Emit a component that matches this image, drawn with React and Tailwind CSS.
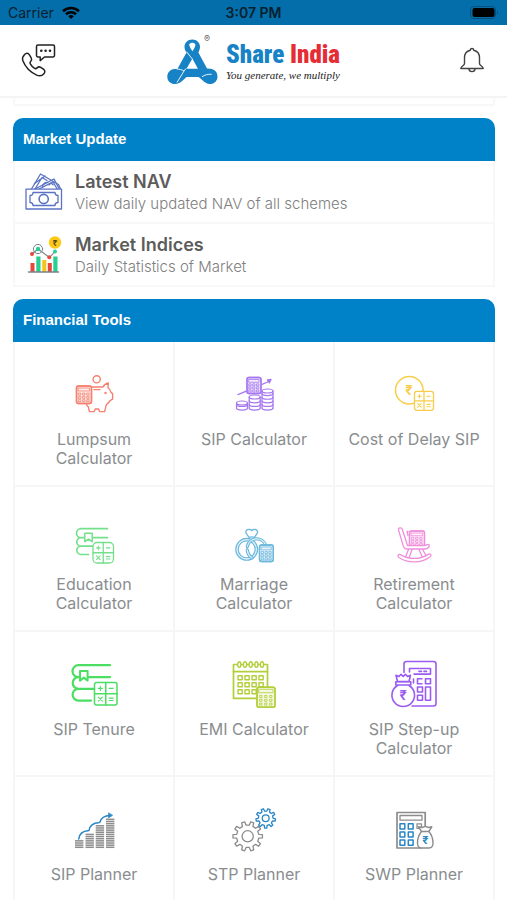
import React from 'react';

const Svg = ({ color = 'currentColor', width = 48, height = 48, children }) => (
  <svg
    width={width}
    height={height}
    viewBox={`0 0 ${width} ${height}`}
    fill="none"
    stroke={color}
    strokeLinecap="round"
    strokeLinejoin="round"
    className="shrink-0 overflow-visible"
    aria-hidden="true"
  >
    {children}
  </svg>
);

const Rupee = ({ x, y, size, color }) => (
  <text
    x={x}
    y={y}
    fontSize={size}
    fontWeight="700"
    fontFamily="Inter, sans-serif"
    textAnchor="middle"
    fill={color}
    stroke="none"
  >
    ₹
  </text>
);

// Small calculator with a display and a grid of keys
const MiniCalc = ({ x, y, w, h }) => {
  const keys = [];
  for (let row = 0; row < 3; row++) {
    for (let col = 0; col < 3; col++) {
      keys.push([x + (w * (col * 2 + 1.6)) / 7.2, y + h * (0.46 + row * 0.19)]);
    }
  }
  return (
    <g>
      <rect x={x} y={y} width={w} height={h} rx="2" fill="white" />
      <rect x={x} y={y} width={w} height={h} rx="2" fill="currentColor" fillOpacity="0.15" />
      <rect x={x + 2} y={y + 2} width={w - 4} height={h * 0.17} strokeWidth="0.8" />
      {keys.map(([kx, ky]) => (
        <rect key={`${kx}-${ky}`} x={kx - 1} y={ky - 1} width="2" height="2" strokeWidth="0.8" />
      ))}
    </g>
  );
};

// Four-key calculator: plus, minus, times, equals
const SignCalc = ({ x, y, s, r = 3 }) => {
  const a = s * 0.26;
  const b = s * 0.74;
  const d = s * 0.09;
  return (
    <g>
      <rect x={x} y={y} width={s} height={s} rx={r} fill="white" />
      <path d={`M${x + s / 2} ${y}v${s}M${x} ${y + s / 2}h${s}`} />
      <path
        d={`M${x + a - d} ${y + a}h${d * 2}M${x + a} ${y + a - d}v${d * 2}
          M${x + b - d} ${y + a}h${d * 2}
          M${x + a - d} ${y + b - d}l${d * 2} ${d * 2}M${x + a + d} ${y + b - d}l${-d * 2} ${d * 2}
          M${x + b - d} ${y + b - 1}h${d * 2}M${x + b - d} ${y + b + 1.4}h${d * 2}`}
        strokeWidth="1.1"
      />
    </g>
  );
};

const CoinStack = ({ x, top, bottom, w = 11 }) => {
  const levels = [];
  for (let y = bottom - 2; y > top + 3; y -= 3.6) levels.push(y);
  return (
    <g strokeWidth="1.2">
      <ellipse cx={x + w / 2} cy={top + 2} rx={w / 2} ry="2" />
      <path d={`M${x} ${top + 2}V${bottom - 2}M${x + w} ${top + 2}V${bottom - 2}`} />
      {levels.map((y) => (
        <path key={y} d={`M${x} ${y}c0 2.7 ${w} 2.7 ${w} 0`} />
      ))}
    </g>
  );
};

const gearPath = (cx, cy, outer, inner, teeth) => {
  const points = [];
  const step = (Math.PI * 2) / teeth;
  for (let i = 0; i < teeth; i++) {
    const mid = i * step - Math.PI / 2 + step / 2;
    [
      [-0.27, inner],
      [-0.17, outer],
      [0.17, outer],
      [0.27, inner],
    ].forEach(([offset, r]) => {
      const angle = mid + offset * step;
      points.push(`${(cx + r * Math.cos(angle)).toFixed(2)} ${(cy + r * Math.sin(angle)).toFixed(2)}`);
    });
  }
  return `M${points.join('L')}Z`;
};

const LumpsumIcon = () => (
  <Svg>
    <g strokeWidth="1.4">
      <circle cx="26.7" cy="9.3" r="3.6" />
      <path d="M22 17h11c1-2 3-3.600 5.300-4l-.3 4.800c1.600 1.200 2.600 2.800 3 4.600l1.600 1.200v5.600l-2.600 1.400c-.8 1.800-2 3-3.600 4l-1.800 7h-5l-1-2.600h-3.400l-1 2.600h-4.800l-1-4.600c-1.200-1-2-2.400-2.400-3.600" />
      <path d="M24 19.600h6" />
      <circle cx="35.500" cy="23" r=".5" />
      <MiniCalc x={6.500} y={16} w={15} h={17.500} />
    </g>
  </Svg>
);

const SipCalculatorIcon = () => (
  <Svg>
    <path d="M8 24.600 40 11" strokeWidth="1.300" />
    <path d="M37.500 9.800l3.500-.3-1.600 3.300z" fill="currentColor" strokeWidth="1.300" />
    <g strokeWidth="1.300">
      <MiniCalc x={17} y={7.500} w={14} h={16} />
    </g>
    <CoinStack x={6.500} top={31} bottom={40} />
    <CoinStack x={19.200} top={25} bottom={40} />
    <CoinStack x={32} top={19} bottom={40} />
  </Svg>
);

const DelayIcon = () => (
  <Svg>
    <circle cx="19.300" cy="20.300" r="13.800" strokeWidth="1.500" />
    <Rupee x={19} y={25} size={13} color="currentColor" />
    <g strokeWidth="1.300">
      <SignCalc x={24.500} y={21.300} s={19} r={2.500} />
    </g>
  </Svg>
);

const EducationIcon = () => (
  <Svg>
    <path
      d="M37.500 13.700H11a4.500 4.500 0 0 0 0 9h26.500M11 22.700a4.200 4.200 0 0 0 0 8.400h12M11 31.100a4.200 4.200 0 0 0 0 8.400h7.500"
      strokeWidth="1.700"
    />
    <path d="M14.800 18.300h7.400v8.400l-3.700-2.600-3.700 2.600z" fill="white" strokeWidth="1.500" />
    <g strokeWidth="1.300">
      <SignCalc x={23} y={27.500} s={20.500} r={4} />
    </g>
  </Svg>
);

const MarriageIcon = () => (
  <Svg>
    <circle cx="16.700" cy="34.300" r="9.700" strokeWidth="3.600" />
    <circle cx="16.700" cy="34.300" r="9.700" stroke="#e2f2fa" strokeWidth="1.300" />
    <path d="M17.400 31.500a9.500 9.500 0 0 1 18.200-1.500M17.300 35c.3 3.400 1.900 6 4.600 7.800" strokeWidth="3.400" />
    <path d="M17.400 31.500a9.500 9.500 0 0 1 18.200-1.500M17.300 35c.3 3.400 1.900 6 4.600 7.800" stroke="#e2f2fa" strokeWidth="1.200" />
    <g strokeWidth="1.300">
      <path d="M19 22.300l-2.600-3.600c-1.600-2.300.6-4.800 3.300-4.200.9.200 1.500.6 2 1.200.5-.6 1.100-1 2-1.200 2.700-.6 4.900 1.900 3.300 4.200l-2.600 3.600c-1.800-.6-3.600-.6-5.400 0z" fill="white" />
      <MiniCalc x={29.500} y={30} w={13.800} h={16.500} />
    </g>
  </Svg>
);

const RetirementIcon = () => (
  <Svg>
    <g strokeWidth="1.300">
      <path d="M18 16.500h-1l1 4" />
      <MiniCalc x={19.500} y={16} w={15} h={16} />
      <path
        d="M8.500 15c-.5-2.500 3-3 3.800-.8l5.200 16.300h16c3 0 4.500-1.500 5-1.200 1.600.6.600 4.700-3.200 4.700H17c-2 0-3-.8-3.600-2.600z"
        fill="white"
      />
      <path d="M18.500 34.500 15.500 42M22 34.500l-3 8.500M29 34.500l3.500 8M32.500 34.500l3.800 6.500" />
      <path
        d="M10.300 39.600c9 5.200 19.600 5.200 28.400-.5 1.800-1 3.200 1.300 1.500 2.600-9.400 6.800-21.600 6.800-31.300.8-1.900-1.300-.6-3.700 1.400-2.900z"
        fill="white"
      />
    </g>
  </Svg>
);

const TenureIcon = () => (
  <Svg>
    <path
      d="M40 5.200H8.500a6 6 0 0 0 0 12H40M8.500 17.200a5.800 5.800 0 0 0 0 11.600H24M8.500 28.800a5.900 5.900 0 0 0 0 11.800H21"
      strokeWidth="2.200"
    />
    <path d="M10 11h7.600v9.600l-3.800-3-3.800 3z" fill="white" strokeWidth="2" />
    <g strokeWidth="1.500">
      <SignCalc x={24.500} y={22.500} s={22.500} r={2} />
    </g>
  </Svg>
);

const EmiIcon = () => (
  <Svg>
    <g strokeWidth="1.700">
      <rect x="3.500" y="4.500" width="34" height="33.800" />
      <path d="M3.500 11.600h34" />
      {[9.300, 15, 20.700, 26.400, 32].map((x) => (
        <ellipse key={x} cx={x} cy="4.600" rx="1.600" ry="2.800" fill="white" strokeWidth="1.400" />
      ))}
      {[15.700, 22.700, 29.700].map((y) =>
        [8, 15, 22, 29].map((x) => (
          <rect key={`${x}-${y}`} x={x} y={y} width="4.200" height="4" strokeWidth="1.400" />
        ))
      )}
    </g>
    <g strokeWidth="1.400">
      <MiniCalc x={27} y={27.300} w={18} h={20} />
    </g>
  </Svg>
);

const StepUpIcon = () => (
  <Svg>
    <g strokeWidth="1.600">
      <path d="M14 12.500V4a2.500 2.500 0 0 1 2.500-2.500h27A2.500 2.500 0 0 1 46 4v39.500a2.500 2.500 0 0 1-2.500 2.500H22" />
      <path d="M19.500 12V8.500H40.500v5.600H24M29 11.400h2.500M34 11.400h2.500" />
      <path d="M23.500 19v4M32 18.800h-4.500v5H32" />
      <rect x="35.500" y="18.800" width="5" height="5" />
      <rect x="27.500" y="27" width="5" height="5" />
      <rect x="27.500" y="35.300" width="5" height="5" />
      <rect x="35.500" y="27" width="5" height="13.300" />
      <path d="M7.500 21.500 6 15.300l3 1.300 2-2.300 2.200 2 2.300-2 2 2.300 3-1.300-1.500 6.200z" />
      <rect x="5.800" y="21.800" width="15" height="3.200" />
      <path d="M7.500 25.500a11.300 11.300 0 1 0 11.500 0" />
    </g>
    <Rupee x={13.300} y={39.500} size={13} color="currentColor" />
  </Svg>
);

const SipPlannerIcon = () => (
  <Svg>
    {[
      [5, 4],
      [15.500, 7],
      [25.700, 11],
      [36, 14],
    ].map(([x, count]) =>
      Array.from({ length: count }, (_, i) => (
        <path key={`${x}-${i}`} d={`M${x} ${42.300 - i * 2.150}h8.400`} strokeWidth="1.500" strokeLinecap="butt" />
      ))
    )}
    <path
      d="M8.700 34c.3-4.600 4-8.300 9.300-8.300M19 25.500c.4-4.500 4.500-7.800 9.500-7.800M29.700 17.500c1.300-4.300 4.800-7 10.300-7"
      stroke="#2a86c4"
      strokeWidth="1.500"
    />
    <path d="M38.600 8.200v4.600l3.700-2.300z" fill="#2a86c4" stroke="#2a86c4" strokeWidth="0.800" />
  </Svg>
);

const StpPlannerIcon = () => (
  <Svg>
    <g strokeWidth="1.300">
      <path d={gearPath(17.700, 31.300, 14.800, 11.200, 10)} />
      <circle cx="17.700" cy="31.300" r="5.600" />
    </g>
    <g stroke="#2a86c4" strokeWidth="1.300">
      <path d={gearPath(35.700, 13.300, 9.800, 7.300, 9)} />
      <circle cx="35.700" cy="13.300" r="3.400" />
    </g>
  </Svg>
);

const SwpPlannerIcon = () => (
  <Svg>
    <g strokeWidth="1.700">
      <path d="M35.200 21V7.500H7V43h24" />
      <rect x="10" y="10.500" width="22" height="4.600" strokeWidth="1.300" />
      <rect x="27" y="18.800" width="4.500" height="4.500" strokeWidth="1.300" />
    </g>
    <g stroke="#2a86c4" strokeWidth="1.500">
      {[18.700, 26.900, 35].map((y) =>
        [10, 18.300].map((x) => (
          <rect key={`${x}-${y}`} x={x} y={y} width="4.800" height="5.200" />
        ))
      )}
    </g>
    <path
      d="M31.500 26.500 28.500 21.800l3.500.7 3.300-1.200 3.300 1.200 3.200-.7-3 4.700c2.700 3 4.200 6.500 4.200 11.500 0 3.500-1.500 5-4 5h-7.500c-2.500 0-4-1.500-4-5 0-5 1.500-8.500 4-11.500zM31 26.500h8.500"
      fill="white"
      strokeWidth="1.400"
    />
    <Rupee x={35.500} y={39} size={11} color="#2a86c4" />
  </Svg>
);

const NavIcon = () => (
  <Svg color="#5b73c4" width={38} height={38}>
    <g strokeWidth="1.300">
      <path d="M6.500 16 15.500 1 33.500 11.500 35.500 16" />
      <path d="M10 16 17 4.500 22 7.500M9.500 10.500 20 3" />
      <path d="M10 16 29 6l5 9.500M14 16 28 8.800l4 7" />
      <path d="M17.500 14c0-3 2.500-4.800 5-4.500M24 12c1-1.600 3-1.800 4.200-.2" />
      <rect x="1" y="16.200" width="35.500" height="19.800" fill="white" />
      <path d="M8 19.500h22c0 2 1 3 3 3v7c-2 0-3 1-3 3H8c0-2-1-3-3-3v-7c2 0 3-1 3-3z" />
      <circle cx="18.700" cy="26" r="4.600" strokeWidth="1.600" />
    </g>
  </Svg>
);

const IndicesIcon = () => (
  <Svg color="#78838a" width={38} height={38}>
    <g stroke="none">
      <rect x="5.500" y="27" width="4" height="9" fill="#e8483c" />
      <rect x="11.300" y="20.500" width="4.200" height="15.500" fill="#27cf93" />
      <rect x="17.300" y="24" width="4" height="12" fill="#f5c518" />
      <rect x="22.800" y="27" width="4" height="9" fill="#e8483c" />
      <rect x="28.300" y="20.500" width="4.200" height="15.500" fill="#27cf93" />
    </g>
    <path d="M3.500 36h30" strokeWidth="1.300" />
    <circle cx="13" cy="13" r="4.600" strokeWidth="1" />
    <path d="M7 18l6-5 11.500 8.500 5.500-6" strokeWidth="1.100" />
    <circle cx="7" cy="18" r="2" fill="#e8483c" stroke="none" />
    <circle cx="13" cy="13" r="2.200" fill="#27cf93" stroke="none" />
    <circle cx="24.300" cy="21.300" r="2" fill="#e8483c" stroke="none" />
    <circle cx="30" cy="15.500" r="2" fill="#27cf93" stroke="none" />
    <circle cx="30" cy="6.500" r="6.200" fill="#fcc917" stroke="none" />
    <Rupee x={30} y={9.500} size={8} color="#5a4a20" />
  </Svg>
);

const PhoneChatIcon = () => (
  <Svg color="#222" width={36} height={36}>
    <g strokeWidth="1.500">
      <path d="M4.600 11.600c1.500-1.800 3.600-1.700 4.800.2l1.800 3c.8 1.400.5 2.600-.6 3.700-.8.800-.8 1.500-.3 2.400 1 1.800 2.400 3.300 4.300 4.400 1 .6 1.700.4 2.500-.4 1-1.100 2.300-1.300 3.600-.5l2.700 1.800c1.800 1.200 1.800 3 .5 4.500-1.800 2.200-4.600 2.600-7.300 1.400C9.900 29 5 23.500 2.800 17.600c-.8-2.300.2-4.300 1.800-6z" />
      <path d="M18 2h15a1.500 1.500 0 0 1 1.500 1.500v9A1.500 1.500 0 0 1 33 14h-8.500l-4.300 3.600V14H18a1.500 1.500 0 0 1-1.500-1.500v-9A1.500 1.500 0 0 1 18 2z" />
    </g>
    <g fill="#222" stroke="none">
      <circle cx="21.300" cy="7.700" r="1.300" />
      <circle cx="25.600" cy="7.700" r="1.300" />
      <circle cx="30" cy="7.700" r="1.300" />
    </g>
  </Svg>
);

const BellIcon = () => (
  <Svg color="#444" width={26} height={28}>
    <g strokeWidth="1.400">
      <path d="M11.300 3.200a1.700 1.700 0 0 1 3.400 0c3.800 1 5.800 3.600 5.800 7.300v6.300c0 1.700 3.700 2.300 3.700 4.700H1.800c0-2.400 3.700-3 3.700-4.700v-6.300c0-3.700 2-6.300 5.800-7.300z" />
      <path d="M10 21.800c0 3.800 6 3.800 6 0" />
    </g>
  </Svg>
);

const LogoMark = () => (
  <svg width="51" height="48" viewBox="0 0 51 48" fill="none" className="shrink-0" aria-hidden="true">
    <path
      d="M25.300 2.500c4.600 0 7.700 3.300 7.700 7.300 0 2.200-.8 4-1.600 5.700L40 31.500l3.500.3c4.200.6 7 3.600 7 7.600 0 4.400-3.200 7.600-7.500 7.600-3.200 0-5.500-1.700-7.500-3.700l-3.800-3.300H19.500l-3.800 3.500c-2.200 2.200-4.700 3.500-7.700 3.500-4.500 0-7.700-3-7.700-7.300 0-4.200 3-7.200 7-7.700l3.200-.2 9-16.200c-1.300-1.900-2-3.700-2-5.800 0-4 3.200-7.300 7.800-7.300z"
      fill="#1783c6"
    />
    <path d="M25.400 21.500 19.500 31.700h11.400z" fill="white" />
    <path d="M22.300 7.200c1.300-2 4.600-2 6 0 .6 1.500-1.100 4.300-2.900 7-1.700-2.700-3.600-5.500-3.100-7z" fill="white" />
    <path
      d="M19.600 14.800 25.300 22M9.500 32c3.200.1 5.300.7 7.500 2L10 45.500M17 34l2-2.500M35 39.800c2.800-2 5.700-2.700 9.700-2.500"
      stroke="white"
      strokeWidth="0.900"
    />
  </svg>
);

const tools = [
  { label: 'Lumpsum Calculator', icon: LumpsumIcon, color: 'text-[#f4816f]' },
  { label: 'SIP Calculator', icon: SipCalculatorIcon, color: 'text-[#a678f0]' },
  { label: 'Cost of Delay SIP', icon: DelayIcon, color: 'text-[#f7ce4b]' },
  { label: 'Education Calculator', icon: EducationIcon, color: 'text-[#74e08a]' },
  { label: 'Marriage Calculator', icon: MarriageIcon, color: 'text-[#6cb8dc]' },
  { label: 'Retirement Calculator', icon: RetirementIcon, color: 'text-[#ef8fdc]' },
  { label: 'SIP Tenure', icon: TenureIcon, color: 'text-[#4ade63]' },
  { label: 'EMI Calculator', icon: EmiIcon, color: 'text-[#b2cf3a]' },
  { label: 'SIP Step-up Calculator', icon: StepUpIcon, color: 'text-[#9a5cf0]' },
  { label: 'SIP Planner', icon: SipPlannerIcon, color: 'text-[#8c8c8c]' },
  { label: 'STP Planner', icon: StpPlannerIcon, color: 'text-[#8c8c8c]' },
  { label: 'SWP Planner', icon: SwpPlannerIcon, color: 'text-[#8c8c8c]' },
];

const updates = [
  { title: 'Latest NAV', text: 'View daily updated NAV of all schemes', icon: NavIcon },
  { title: 'Market Indices', text: 'Daily Statistics of Market', icon: IndicesIcon },
];

const StatusBar = () => (
  <div className="grid h-[25px] shrink-0 grid-cols-3 items-center bg-[#046eaa] px-2 text-sm text-[#06202f]">
    <div className="flex items-center gap-2">
      <span>Carrier</span>
      <svg width="18" height="13" viewBox="0 0 18 13" fill="none" stroke="#000" strokeWidth="2.600" aria-hidden="true">
        <path d="M1 5.200a11.500 11.500 0 0 1 16 0M4 8.300a7.200 7.200 0 0 1 10 0" />
        <path d="M6.300 10.300a4 4 0 0 1 5.400 0L9 13z" fill="#000" stroke="none" />
      </svg>
    </div>
    <div className="text-center font-semibold">3:07 PM</div>
    <svg width="29" height="13" viewBox="0 0 29 13" className="justify-self-end" aria-hidden="true">
      <rect x="0.500" y="0.500" width="25" height="12" rx="3.500" fill="none" stroke="#04507c" />
      <rect x="2.500" y="2" width="22" height="9" rx="2" fill="#000" />
      <path d="M27 4.500c1.500.5 1.500 3.500 0 4z" fill="#04507c" />
    </svg>
  </div>
);

const Header = () => (
  <header className="flex h-[73px] shrink-0 items-center justify-between border-b-2 border-[#f4f4f4] px-5">
    <button type="button" aria-label="Contact us">
      <PhoneChatIcon />
    </button>
    <a href="#home" className="flex items-center gap-2">
      <span className="relative">
        <LogoMark />
        <span className="absolute -top-1 right-2 text-[9px] leading-3 text-[#666]">®</span>
      </span>
      <span className="flex flex-col whitespace-nowrap">
        <span className="font-['Roboto_Condensed','Liberation_Sans',sans-serif] text-[25px] leading-7 font-black text-[#1783c6]">
          Share <span className="text-[#e52d35]">India</span>
        </span>
        <span className="font-['Liberation_Serif',serif] text-[11px] leading-3 font-medium text-[#222] italic">
          You generate, we multiply
        </span>
      </span>
    </a>
    <button type="button" aria-label="Notifications" className="flex w-9 justify-end pr-0.5">
      <BellIcon />
    </button>
  </header>
);

const SectionTitle = ({ children }) => (
  <h2 className="flex h-[43px] items-center rounded-t-[10px] bg-[#0082c8] px-[10px] font-['Liberation_Sans',sans-serif] text-[15px] font-bold text-white">
    {children}
  </h2>
);

export default function App() {
  return (
    <div className="flex h-screen flex-col overflow-hidden bg-white font-['Inter',sans-serif]">
      <StatusBar />
      <Header />
      <main className="min-h-0 flex-1 overflow-hidden pr-3 pl-[13px]">
        <div className="h-2 border-x-2 border-b-2 border-[#f8f8f8]" />

        <section className="mt-3">
          <SectionTitle>Market Update</SectionTitle>
          {updates.map(({ title, text, icon: Icon }) => (
            <a
              key={title}
              href="#market"
              className="flex h-[63px] items-center gap-3 border-x-2 border-b-2 border-[#f8f8f8] px-[10px]"
            >
              <Icon />
              <span className="flex flex-col">
                <span className="text-lg leading-6 font-semibold text-[#5c5c5c]">{title}</span>
                <span className="text-[15px] leading-5 font-light text-[#808080]">{text}</span>
              </span>
            </a>
          ))}
        </section>

        <section className="mt-3">
          <SectionTitle>Financial Tools</SectionTitle>
          <div className="grid grid-cols-3 border-l-2 border-[#f6f6f6]">
            {tools.map(({ label, icon: Icon, color }) => (
              <button
                key={label}
                type="button"
                className="flex h-[145px] flex-col items-center gap-3 border-r-2 border-b-2 border-[#f6f6f6] px-3 pt-7"
              >
                <span className={color}>
                  <Icon />
                </span>
                <span className="text-base leading-[19px] text-[#8a8d8f]">{label}</span>
              </button>
            ))}
          </div>
        </section>
      </main>
    </div>
  );
}
